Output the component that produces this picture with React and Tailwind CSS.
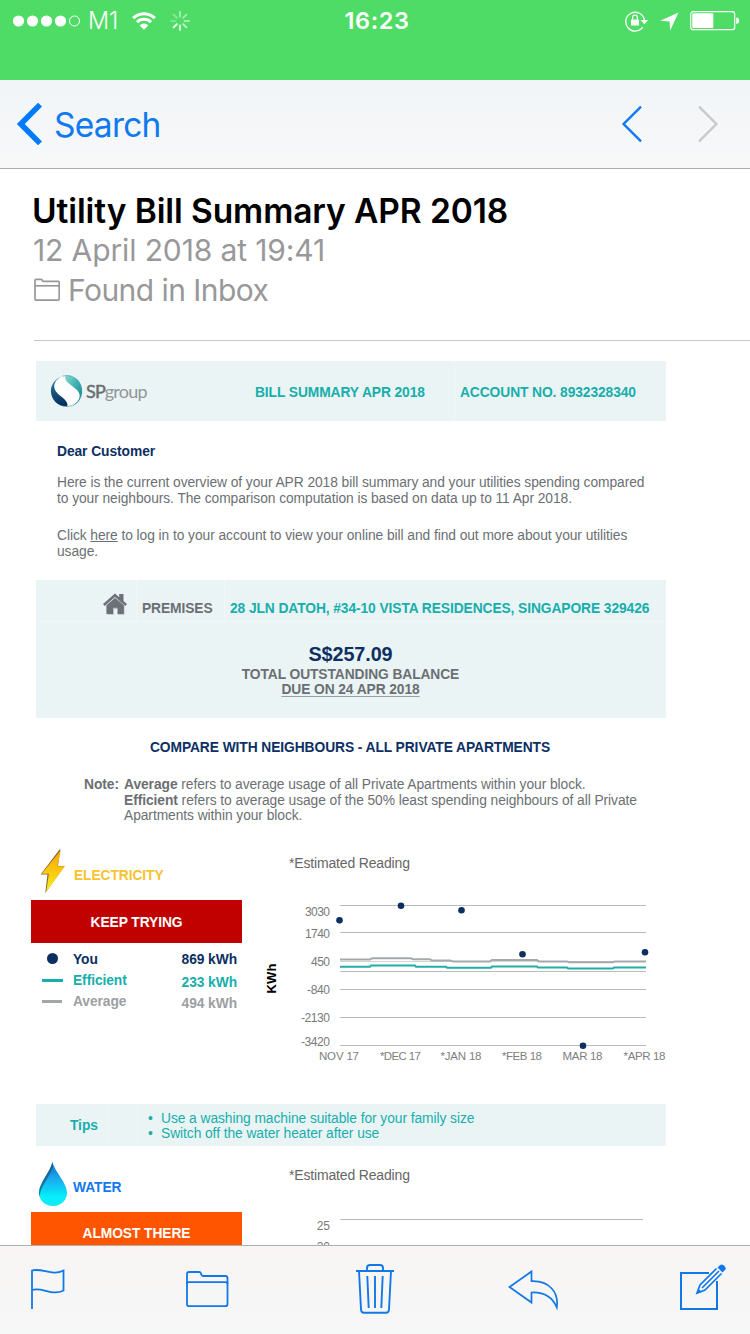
import React from "react";

function StatusBar() {
  return (
    <div className="flex h-20 shrink-0 items-start bg-[#4fdc66] text-white">
      <div className="grid h-10 w-full grid-cols-3 items-center">
        <div className="flex items-center pl-[13px]">
          <svg width="68" height="12" viewBox="0 0 68 12" fill="#fff">
            <circle cx="5.5" cy="6" r="5.6" />
            <circle cx="19.5" cy="6" r="5.6" />
            <circle cx="33.5" cy="6" r="5.6" />
            <circle cx="47.5" cy="6" r="5.6" />
            <circle cx="61.5" cy="6" r="5" fill="none" stroke="#fff" strokeWidth="1" />
          </svg>
          <span className="ml-[7px] w-[44px] pt-px text-[23.5px] leading-10 font-light tracking-[-0.2px]">M1</span>
          <svg width="24" height="18" viewBox="0 0 24 18" fill="none" stroke="#fff" strokeWidth="3">
            <path d="M1.2 6.2 A15.5 15.5 0 0 1 22.8 6.2" />
            <path d="M5 10.2 A10 10 0 0 1 19 10.2" />
            <path d="M12 17.8 L7.6 13.4 A6.3 6.3 0 0 1 16.4 13.4 Z" fill="#fff" stroke="none" />
          </svg>
          <svg className="ml-[14px]" width="20" height="20" viewBox="0 0 20 20" stroke="#fff" strokeWidth="1.8" strokeLinecap="round">
            <path d="M10 1v4.6" opacity=".55" />
            <path d="M16.4 3.6l-3.3 3.3" opacity=".5" />
            <path d="M19 10h-4.6" opacity=".5" />
            <path d="M16.4 16.4l-3.3-3.3" opacity=".65" />
            <path d="M10 19v-4.6" opacity=".85" />
            <path d="M3.6 16.4l3.3-3.3" opacity="1" />
            <path d="M1 10h4.6" opacity=".25" />
            <path d="M3.6 3.6l3.3 3.3" opacity=".35" />
          </svg>
        </div>
        <div className="pt-px pl-[4px] text-center text-[23.5px] leading-10 font-semibold tracking-[0.6px]">16:23</div>
        <div className="flex items-center justify-end pr-[10px]">
          <svg width="24" height="22" viewBox="0 0 24 22" fill="none">
            <path d="M17.8 17.2 A9.4 9.4 0 1 1 19.4 9.8" stroke="#fff" strokeWidth="1.3" />
            <path d="M15.6 10h7.6l-3.8 4.2z" fill="#fff" />
            <rect x="6" y="9.4" width="8" height="6.2" rx=".6" fill="#fff" />
            <path d="M7.6 9.6V7.4a2.4 2.4 0 0 1 4.8 0v2.2" stroke="#fff" strokeWidth="1.2" />
          </svg>
          <svg className="ml-[11px]" width="20" height="20" viewBox="0 0 20 20">
            <path d="M18.500 1.500 L.3 9.800 L9.600 10.400 L10.200 19.600 Z" fill="#fff" />
          </svg>
          <svg className="mt-px ml-[10px]" width="50" height="20" viewBox="0 0 50 20">
            <rect x=".7" y=".7" width="44" height="18" rx="2.5" fill="none" stroke="#fff" strokeWidth="1.2" />
            <rect x="2.3" y="2.3" width="21" height="14.8" rx="1" fill="#fff" />
            <path d="M46.2 6.5 q3 .4 3 3.2 q0 2.8 -3 3.2 z" fill="#fff" />
          </svg>
        </div>
      </div>
    </div>
  );
}

function NavBar() {
  return (
    <nav className="flex h-[89px] shrink-0 items-center border-b border-[#acaeb0] bg-linear-to-b from-[#f1f5f8] to-[#f8f8f8] pl-4 text-[#0f7af0]">
      <svg width="28" height="44" viewBox="0 0 28 44" fill="none" stroke="#007aff" strokeWidth="5.6">
        <path d="M24 2.6 L4.8 22 L24 41.4" />
      </svg>
      <span className="ml-[10px] flex-1 pt-px text-[33.5px] leading-[44px] tracking-[-0.75px]">Search</span>
      <svg width="22" height="38" viewBox="0 0 22 38" fill="none" stroke="#0f7af0" strokeWidth="2.4">
        <path d="M20 1.6 L2.6 19 L20 36.4" />
      </svg>
      <svg className="mr-[31px] ml-[54px]" width="22" height="38" viewBox="0 0 22 38" fill="none" stroke="#c8c9cb" strokeWidth="2.4">
        <path d="M2 1.6 L19.4 19 L2 36.4" />
      </svg>
    </nav>
  );
}

function MessageHeader() {
  return (
    <header className="ml-[34px] flex h-[172px] shrink-0 flex-col border-b border-[#c6c7ca] pt-[22px]">
      <h1 className="-ml-[2px] text-[33.5px] leading-10 font-semibold tracking-[-0.1px] whitespace-nowrap text-black">Utility Bill Summary APR 2018</h1>
      <p className="-ml-px text-[30px] leading-[39px] tracking-[-0.12px] text-[#98989a]">12 April 2018 at 19:41</p>
      <div className="flex items-center text-[#98989a]">
        <svg width="26" height="24" viewBox="0 0 26 24" fill="none" stroke="#98989a" strokeWidth="1.7" strokeLinejoin="round">
          <path d="M1 21V2.5q0-1.2 1.2-1.2H7q.8 0 1.2.8l.6 1.2H24q1.2 0 1.2 1.2V21q0 1.2-1.2 1.2H2.2Q1 22.200 1 21z" />
          <path d="M1 7.800h24" />
        </svg>
        <span className="ml-2 text-[30px] leading-10 tracking-[-0.55px]">Found in Inbox</span>
      </div>
    </header>
  );
}

function SpLogo() {
  return (
    <svg width="116" height="34" viewBox="0 0 116 34">
      <defs>
        <linearGradient id="navy" x1="0.3" y1="0" x2="0.5" y2="1">
          <stop offset="0" stopColor="#3f9db0" />
          <stop offset="0.4" stopColor="#1c5a80" />
          <stop offset="1" stopColor="#062c5e" />
        </linearGradient>
        <linearGradient id="teal" x1="0" y1="0" x2="1" y2="1">
          <stop offset="0" stopColor="#8ad6d2" />
          <stop offset="0.5" stopColor="#39aeac" />
          <stop offset="1" stopColor="#1e7a8a" />
        </linearGradient>
      </defs>
      <circle cx="16.500" cy="17" r="15.300" fill="#fff" />
      <path d="M11.500 2.500 C5 5 .9 10.500 .9 17 C1 26 8 32.500 17 32.600 C18.500 30.500 16.500 27 12.500 23.500 C8 20 4.200 17 4.200 12 C4.500 7.500 8 4.500 11.500 2.500Z" fill="url(#navy)" />
      <path d="M16 1.400 C25 .6 32.200 8 32.200 17 C32.200 24.500 27 31 21.500 32 C26 29.500 30 26 29.600 21 C29 16 23.500 13.500 19.500 10 C16.500 7.300 13.500 4 16 1.400Z" fill="url(#teal)" />
      <path d="M12 2.200 Q16.500 .9 21 2.200M12.500 32 Q17 33.300 22 31.600" fill="none" stroke="#4fa9b2" strokeWidth=".7" />
      <text x="36" y="24" fontFamily="Lato, sans-serif" fontSize="18" fontWeight="400" letterSpacing="-0.75" fill="#93969a">
        <tspan fill="#6b6e72" stroke="#6b6e72" strokeWidth=".5">SP</tspan>group
      </text>
    </svg>
  );
}

function BillBanner() {
  return (
    <section className="ml-[5px] grid h-[60px] w-[630px] grid-cols-[190px_229px_211px] items-center bg-[#eaf4f5] text-[13.8px] font-bold tracking-[-0.09px] text-[#17aeab]">
      <div className="flex h-full items-center border-r border-[#edf6f7] pl-[14px]">
        <SpLogo />
      </div>
      <div className="flex h-full items-center border-r border-[#f1f8f9] pt-[4px] pl-[29px] whitespace-nowrap">BILL SUMMARY APR 2018</div>
      <div className="pt-[4px] pl-[5px] whitespace-nowrap">ACCOUNT NO. 8932328340</div>
    </section>
  );
}

function Letter() {
  return (
    <section className="mt-[22px] ml-[26px] text-[13.8px] leading-4 tracking-[-0.065px] whitespace-nowrap text-[#6b6f73]">
      <p className="pt-px font-bold text-[#0d2f63]">Dear Customer</p>
      <p className="mt-[15px]">
        Here is the current overview of your APR 2018 bill summary and your utilities spending compared
        <br />
        to your neighbours. The comparison computation is based on data up to 11 Apr 2018.
      </p>
      <p className="mt-[21px]">
        Click <span className="underline">here</span> to log in to your account to view your online bill and find out more about your utilities
        <br />
        usage.
      </p>
    </section>
  );
}

function HouseIcon() {
  return (
    <svg width="26" height="24" viewBox="0 0 26 24">
      <path d="M12.500 5 L21.500 12.500v9.300h-6.500V16h-4v5.800H4.500V12z" fill="#b9c1c6" />
      <path d="M12 .6 L16.200 4.200V1h4.300v6.900L24 11l-1.600 2L12 4 1.600 13 0 11z" fill="#6c7077" />
      <path d="M12 4.900 L20.800 12.300V21h-6.300V14.800h-4.500V21H3.400V12.300z" fill="#6c7077" />
    </svg>
  );
}

function Premises() {
  return (
    <section className="mt-5 ml-[5px] h-[138px] w-[630px] bg-[#eaf4f5] text-[13.8px] font-bold tracking-[-0.09px] text-[#6b6f73]">
      <div className="flex h-[42px] border-b border-[#f0f7f8] whitespace-nowrap">
        <div className="w-[101px] border-r border-[#f0f7f8] pt-[13px] pl-[67px]">
          <HouseIcon />
        </div>
        <div className="w-[88px] border-r border-[#f0f7f8] pt-[21px] pl-[5px] leading-4">PREMISES</div>
        <div className="pt-[21px] pl-[5px] leading-4 text-[#17aeab]">28 JLN DATOH, #34-10 VISTA RESIDENCES, SINGAPORE 329426</div>
      </div>
      <div className="pt-5 pr-px text-center">
        <p className="text-[19.8px] leading-6 text-[#0d2f63]">S$257.09</p>
        <p className="pt-px leading-[15px]">TOTAL OUTSTANDING BALANCE</p>
        <p className="leading-[15px] underline decoration-[#9a9ea2] decoration-1 underline-offset-2">DUE ON 24 APR 2018</p>
      </div>
    </section>
  );
}

function CompareNote() {
  return (
    <section className="w-[638px] text-[13.8px] tracking-[-0.065px] whitespace-nowrap text-[#6b6f73]">
      <h2 className="mt-[22px] text-center leading-4 font-bold tracking-[-0.08px] text-[#0d2f63]">COMPARE WITH NEIGHBOURS - ALL PRIVATE APARTMENTS</h2>
      <div className="mt-[21px] flex pl-[53px] leading-[15.5px]">
        <b className="w-10">Note:</b>
        <p>
          <b>Average</b> refers to average usage of all Private Apartments within your block.
          <br />
          <b>Efficient</b> refers to average usage of the 50% least spending neighbours of all Private
          <br />
          Apartments within your block.
        </p>
      </div>
    </section>
  );
}

function BoltIcon() {
  return (
    <svg width="26" height="46" viewBox="0 0 26 46">
      <defs>
        <linearGradient id="bolt" x1="0" y1="0" x2="0" y2="1">
          <stop offset="0" stopColor="#f2a30c" />
          <stop offset="0.5" stopColor="#fcc60f" />
          <stop offset="1" stopColor="#f6f01c" />
        </linearGradient>
      </defs>
      <path d="M20.300 .5 L.7 26.500 L7.500 26.500 L5.300 45 L24.500 18 L18 18z" fill="#7a6626" />
      <path d="M20.800 2 L1.800 25.700 L8.800 25.700 L6.300 43.500 L25 18.200 L17.500 18.200z" fill="url(#bolt)" />
    </svg>
  );
}

function DropIcon() {
  return (
    <svg width="30" height="46" viewBox="0 0 30 46">
      <defs>
        <linearGradient id="drop" x1="0" y1="0" x2="0" y2="1">
          <stop offset="0" stopColor="#0c6fc0" />
          <stop offset="0.35" stopColor="#1ba4ee" />
          <stop offset="0.8" stopColor="#05f0fb" />
          <stop offset="1" stopColor="#12e8f2" />
        </linearGradient>
      </defs>
      <path d="M14.300 1 C13 10 1 22 1 31.500 C1 39.500 7 45 15 45 C23 45 29 39.500 29 31.500 C29 22 17 11 14.300 1Z" fill="url(#drop)" />
      <path d="M14.300 1 C13 10 1 22 1 31.500 C1 33 1.300 34.500 1.800 36 C1.500 25 13.500 15 14.800 5Z" fill="#17506f" opacity=".65" />
    </svg>
  );
}

const months = [
  ["NOV 17", 339, 920, 40],
  ["*DEC 17", 400.5, 905.5, 41],
  ["*JAN 18", 461, 910, 41],
  ["*FEB 18", 522, 954, 40],
  ["MAR 18", 582.5, 1045.5, 40],
  ["*APR 18", 644.5, 952, 42],
];

const ticks = [
  ["3030", 912, 25],
  ["1740", 933.5, 25],
  ["450", 961.5, 19],
  ["-840", 989.5, 23],
  ["-2130", 1018, 29],
  ["-3420", 1041.5, 29],
];

function EnergyChart() {
  return (
    <svg width="410" height="230" viewBox="260 845 410 230" fontFamily="Liberation Sans, Arial, sans-serif">
      <text x="289" y="868" fontSize="14" fill="#666" textLength="121">*Estimated Reading</text>
      {[905.5, 932.5, 971.5, 989.5, 1017.5, 1045.5].map((y) => (
        <path key={y} d={`M340 ${y}H646`} stroke="#b9bbbd" strokeWidth="1" />
      ))}
      <path d="M340 961.500H646" stroke="#d2d4d5" strokeWidth="1" />
      <path d="M340 959.500H370L372 958.300H411L413 959.300H430L432 960.400H450L453 961.400H490L492 960.100H537L539 961.400H567L569 962.300H613L615 961.400H646" fill="none" stroke="#a5a9ac" strokeWidth="2" />
      <path d="M340 966.700H370L371 965.600H415L416 966.700H446L447 967.700H491L492 966.500H537L538 967.600H567L568 968.600H613L614 967.600H646" fill="none" stroke="#22adab" strokeWidth="2" />
      {months.map(([label, x, y, w]) => (
        <g key={label}>
          <circle cx={x + 0.5} cy={y + 0.3} r="3.300" fill="#0c2f62" />
          <text x={x} y="1060" fontSize="11.500" fill="#7d7f81" textAnchor="middle" textLength={w}>{label}</text>
        </g>
      ))}
      {ticks.map(([label, y, w]) => (
        <text key={label} x="330" y={y + 4} fontSize="12" fill="#77797b" textAnchor="end" textLength={w}>{label}</text>
      ))}
      <text transform="translate(276 993.500) rotate(-90)" fontSize="13" fontWeight="700" fill="#000" textLength="30">KWh</text>
    </svg>
  );
}

function Electricity() {
  return (
    <section className="mt-[21px] flex h-[259px]">
      <div className="w-[211px] text-[13.8px] font-bold tracking-[-0.08px]">
        <div className="flex h-[55px] items-start pt-[3px] pl-[9px]">
          <BoltIcon />
          <span className="mt-[20px] ml-[8px] leading-4 text-[#f9c22e]">ELECTRICITY</span>
        </div>
        <div className="flex h-[43px] items-center justify-center bg-[#c10000] pt-[4px] text-white">KEEP TRYING</div>
        <ul className="pt-[6px] leading-[22px] whitespace-nowrap">
          <li className="flex h-[22px] items-center text-[#0c2f62]">
            <span className="-mt-[2px] ml-4 size-[11px] rounded-full bg-[#0c2f62]" />
            <span className="ml-[15px] flex-1">You</span>
            <span className="mr-[5px]">869 kWh</span>
          </li>
          <li className="flex h-[21px] items-center text-[#17aeab]">
            <span className="-mt-[2px] ml-[11px] h-[3px] w-[21px] bg-[#17aeab]" />
            <span className="ml-[10px] flex-1">Efficient</span>
            <span className="mr-[5px] pt-[3px]">233 kWh</span>
          </li>
          <li className="flex h-[21px] items-center text-[#9c9fa2]">
            <span className="-mt-[2px] ml-[11px] h-[3px] w-[20px] bg-[#a2a6aa]" />
            <span className="ml-[11px] flex-1">Average</span>
            <span className="mr-[5px] pt-[3px]">494 kWh</span>
          </li>
        </ul>
      </div>
      <div className="ml-[18px]">
        <EnergyChart />
      </div>
    </section>
  );
}

function Tips() {
  return (
    <section className="ml-[5px] flex h-[42px] w-[630px] shrink-0 items-center bg-[#eaf4f5] text-[13.8px] tracking-[-0.065px] whitespace-nowrap text-[#17aeab]">
      <b className="flex h-full w-[73px] items-center border-r border-[#eef6f7] pt-[4px] pl-[34px]">Tips</b>
      <span className="h-full w-[29px] border-r border-[#eef6f7]" />
      <ul className="pt-[2px] leading-[15px]">
        <li className="flex"><span className="w-[23px] pl-[10px]">•</span>Use a washing machine suitable for your family size</li>
        <li className="flex"><span className="w-[23px] pl-[10px]">•</span>Switch off the water heater after use</li>
      </ul>
    </section>
  );
}

function Water() {
  return (
    <section className="mt-[12px] flex">
      <div className="w-[211px] text-[13.8px] font-bold tracking-[-0.08px]">
        <div className="flex h-[54px] items-start pt-[3px] pl-[7px]">
          <DropIcon />
          <span className="mt-[19px] ml-[5px] leading-4 text-[#1478ee]">WATER</span>
        </div>
        <div className="flex h-[42px] items-center justify-center bg-[#ff5500] pt-[4px] text-white">ALMOST THERE</div>
      </div>
      <svg className="ml-[18px]" width="410" height="96" viewBox="260 1158 410 96" fontFamily="Liberation Sans, Arial, sans-serif">
        <text x="289" y="1180" fontSize="14" fill="#666" textLength="121">*Estimated Reading</text>
        <path d="M340 1219.500H643" stroke="#b9bbbd" />
        <text x="330" y="1230" fontSize="12" fill="#77797b" textAnchor="end">25</text>
        <text x="330" y="1251" fontSize="12" fill="#77797b" textAnchor="end">20</text>
      </svg>
    </section>
  );
}

function Toolbar() {
  return (
    <footer className="flex h-[89px] shrink-0 border-t border-[#acaeb0] bg-linear-to-b from-[#f8f5f4] to-[#f6f7f7] pt-[17px]">
      <svg className="ml-[30px]" width="36" height="48" viewBox="30 1263 36 48" fill="none" stroke="#1178e8" strokeWidth="1.800">
        <path d="M32 1309V1270.500C42 1267.500 52 1276.500 63.500 1270.500V1290.500C52 1296.500 42 1286.500 32 1290" />
      </svg>
      <svg className="ml-[119px]" width="46" height="48" viewBox="185 1263 46 48" fill="none" stroke="#1178e8" strokeWidth="1.800">
        <path d="M187 1304V1274Q187 1272 189 1272H199Q200.500 1272 201 1273.500L201.500 1275Q202 1276 203.500 1276H225.500Q227.500 1276 227.500 1278V1304Q227.500 1306.200 225.500 1306.200H189Q187 1306.200 187 1304Z" />
        <path d="M187 1284Q187 1282.200 189 1282.200H225.500Q227.500 1282.200 227.500 1284" />
      </svg>
      <svg className="ml-[124px]" width="40" height="52" viewBox="355 1263 40 52" fill="none" stroke="#1178e8" strokeWidth="1.900">
        <path d="M356 1271H394" />
        <path d="M367 1271V1268Q367 1265 370 1265H380Q383 1265 383 1268V1271" />
        <path d="M359 1271L361 1309.500Q361.200 1312.800 364 1312.800H386Q388.800 1312.800 389 1309.500L391 1271" />
        <path d="M367.300 1276L368.700 1308M375 1276V1308M382.700 1276L381.300 1308" />
      </svg>
      <svg className="ml-[112px]" width="54" height="48" viewBox="507 1263 54 48" fill="none" stroke="#1178e8" strokeWidth="1.700">
        <path d="M531.500 1271.500L509.500 1287L531.500 1302.500V1292.500C543 1292 552 1296 556.800 1307.500C559 1292 549 1280.500 531.500 1281.200Z" />
      </svg>
      <svg className="ml-[118px]" width="50" height="48" viewBox="679 1263 50 48" fill="none" stroke="#1178e8" strokeWidth="2">
        <path d="M709 1273H681V1309H717V1281" />
        <path d="M716.500 1268.500L700 1285L697 1293L705 1290L721.500 1273.500M719 1271L702 1288" strokeWidth="1.700" />
        <path d="M717.500 1267.500L720 1265.200Q721.800 1263.700 723.500 1265.200L725 1266.700Q726.500 1268.500 725 1270L722.500 1272.500Z" fill="#1178e8" stroke="none" />
        <path d="M696.500 1293.800L698.200 1288.500L701.800 1292Z" fill="#1178e8" stroke="none" />
      </svg>
    </footer>
  );
}

export default function App() {
  return (
    <div className="flex h-[1334px] w-[750px] flex-col overflow-hidden bg-white font-['Inter',sans-serif]">
      <StatusBar />
      <NavBar />
      <MessageHeader />
      <main className="min-h-0 flex-1 overflow-hidden pt-5 pl-[31px] font-['Liberation_Sans',Arial,sans-serif]">
        <BillBanner />
        <Letter />
        <Premises />
        <CompareNote />
        <Electricity />
        <Tips />
        <Water />
      </main>
      <Toolbar />
    </div>
  );
}
